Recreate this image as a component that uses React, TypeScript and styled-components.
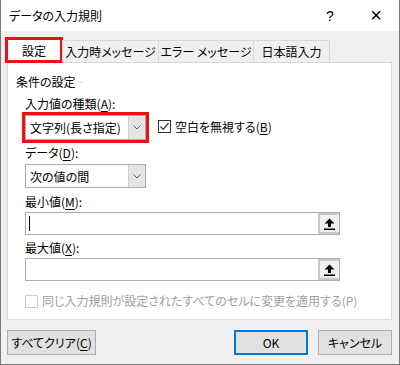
import React from 'react';
import styled, {createGlobalStyle} from 'styled-components';

const GlobalStyle = createGlobalStyle`
body {
margin: 0;
background: #ffffff;
}
* {
box-sizing: border-box;
}
`;

const Window = styled.div`
width: 400px;
height: 365px;
display: flex;
flex-direction: column;
background-color: #f0f0f0;
border: 1px solid #7a7a7a;
border-top: none;
font-family: "Noto Sans CJK JP", "Noto Sans", sans-serif;
font-feature-settings: "palt";
font-size: 12px;
color: #000000;
`;

const TitleBar = styled.div`
height: 31px;
background-color: #ffffff;
display: flex;
align-items: center;
padding-left: 8px;
`;

const TitleText = styled.div`
flex: 1;
`;

interface TitleButtonProps {
    readonly size: number;
}

const TitleButton = styled.div<TitleButtonProps>`
width: 46px;
height: 31px;
display: flex;
align-items: center;
justify-content: center;
font-family: "Liberation Sans", sans-serif;
font-size: ${(props) => props.size}px;
font-weight: 300;
`;

const Content = styled.div`
padding: 6px 0 0 6px;
display: flex;
flex-direction: column;
`;

const TabRow = styled.div`
display: flex;
align-items: flex-end;
height: 26px;
margin-left: -2px;
position: relative;
z-index: 1;
`;

interface TabProps {
    readonly width: number;
    readonly active?: boolean;
}

const Tab = styled.div<TabProps>`
width: ${(props) => props.width}px;
height: ${(props) => props.active ? 26 : 22}px;
display: flex;
align-items: center;
justify-content: center;
background-color: ${(props) => props.active ? '#ffffff' : '#f0f0f0'};
border: ${(props) => props.active ? '3px solid #ee1111' : '1px solid #d9d9d9'};
border-bottom: ${(props) => props.active ? '3px solid #ee1111' : 'none'};
margin-left: ${(props) => props.active ? 0 : -1}px;
margin-bottom: ${(props) => props.active ? 0 : 1}px;
white-space: nowrap;
`;

const Panel = styled.div`
width: 385px;
height: 258px;
margin-top: -1px;
background-color: #ffffff;
border: 1px solid #d9d9d9;
padding: 11px 0 0 8px;
display: flex;
flex-direction: column;
`;

const GroupTitle = styled.div`
display: flex;
align-items: center;
line-height: 16px;
height: 16px;
`;

const GroupLine = styled.div`
width: 5px;
height: 1px;
margin-left: 2px;
background-color: #dcdcdc;
`;

const Group = styled.div`
padding-left: 9px;
display: flex;
flex-direction: column;
`;

interface LabelProps {
    readonly top: number;
}

const Label = styled.div<LabelProps>`
line-height: 16px;
height: 16px;
margin-top: ${(props) => props.top}px;
`;

const U = styled.span`
text-decoration: underline;
text-underline-offset: 2px;
`;

const ComboRow = styled.div`
display: flex;
align-items: center;
margin-left: -3px;
`;

const Highlight = styled.div`
border: 3px solid #ee1111;
`;

interface ComboProps {
    readonly top?: number;
    readonly h: number;
}

const Combo = styled.div<ComboProps>`
width: 121px;
height: ${(props) => props.h}px;
margin-top: ${(props) => props.top || 0}px;
border: 1px solid #adadad;
background-color: #ffffff;
display: flex;
align-items: stretch;
`;

const ComboText = styled.div`
flex: 1;
display: flex;
align-items: center;
padding-left: 4px;
font-size: 12px;
`;

const ComboButton = styled.div`
width: 17px;
background-color: #e5e5e5;
border-left: 1px solid #d0d0d0;
display: flex;
align-items: center;
justify-content: center;
`;

const CheckLabel = styled.label`
display: flex;
align-items: center;
margin-left: 9px;
margin-top: -2px;
gap: 4px;
`;

interface BoxProps {
    readonly disabled?: boolean;
}

const CheckBox = styled.div<BoxProps>`
width: 13px;
height: 13px;
border: 1px solid ${(props) => props.disabled ? '#cccccc' : '#333333'};
background-color: #ffffff;
display: flex;
align-items: center;
justify-content: center;
`;

interface FieldProps {
    readonly top: number;
}

const Field = styled.div<FieldProps>`
width: 315px;
height: 23px;
margin-top: ${(props) => props.top}px;
border: 1px solid #adadad;
display: flex;
align-items: stretch;
`;

const FieldText = styled.div`
flex: 1;
display: flex;
align-items: center;
padding-left: 3px;
`;

const Caret = styled.div`
width: 1px;
height: 15px;
background-color: #000000;
`;

const RefButton = styled.div`
width: 21px;
background-color: #f0f0f0;
border: 2px solid #c8c8c8;
border-right: none;
display: flex;
align-items: center;
justify-content: center;
`;

const ApplyRow = styled.div`
display: flex;
align-items: center;
gap: 4px;
margin-top: 12px;
margin-left: 9px;
color: #a0a0a0;
line-height: 16px;
`;

const Footer = styled.div`
display: flex;
align-items: center;
margin-top: 10px;
padding: 0 7px 0 6px;
`;

interface ButtonProps {
    readonly width: number;
    readonly primary?: boolean;
    readonly gapLeft?: number;
}

const Button = styled.div<ButtonProps>`
width: ${(props) => props.width}px;
height: 25px;
margin-left: ${(props) => props.gapLeft || 0}px;
display: flex;
align-items: center;
justify-content: center;
background-color: #e1e1e1;
border: ${(props) => props.primary ? '2px solid #0078d7' : '1px solid #adadad'};
font-size: 12px;
`;

const Spacer = styled.div`
flex: 1;
`;

const Chevron = () => (
    <svg width="8" height="5" viewBox="0 0 8 5">
        <path d="M0.5 0.5 L4 4 L7.5 0.5" fill="none" stroke="#606060" strokeWidth="1"/>
    </svg>
);

const Check = () => (
    <svg width="11" height="11" viewBox="0 0 11 11">
        <path d="M1.5 5.5 L4.2 8.3 L9.5 2" fill="none" stroke="#333333" strokeWidth="1.2"/>
    </svg>
);

const RefIcon = () => (
    <svg width="11" height="12" viewBox="0 0 11 12">
        <path d="M5.5 0.5 L10.5 5.5 L7 5.5 L7 9 L4 9 L4 5.5 L0.5 5.5 Z" fill="#000000"/>
        <rect x="0" y="10.5" width="11" height="1.5" fill="#000000"/>
    </svg>
);

const App = () => {
    return (
        <Window>
            <GlobalStyle/>
            <TitleBar>
                <TitleText>データの入力規則</TitleText>
                <TitleButton size={14}>?</TitleButton>
                <TitleButton size={20}>×</TitleButton>
            </TitleBar>
            <Content>
                <TabRow>
                    <Tab width={58} active>設定</Tab>
                    <Tab width={97}>入力時メッセージ</Tab>
                    <Tab width={96}>エラー メッセージ</Tab>
                    <Tab width={77}>日本語入力</Tab>
                </TabRow>
                <Panel>
                    <GroupTitle>条件の設定<GroupLine/></GroupTitle>
                    <Group>
                        <Label top={6}>入力値の種類(<U>A</U>):</Label>
                        <ComboRow>
                            <Highlight>
                                <Combo h={25}>
                                    <ComboText>文字列(長さ指定)</ComboText>
                                    <ComboButton><Chevron/></ComboButton>
                                </Combo>
                            </Highlight>
                            <CheckLabel>
                                <CheckBox><Check/></CheckBox>
                                <span>空白を無視する(<U>B</U>)</span>
                            </CheckLabel>
                        </ComboRow>
                        <Label top={2}>データ(<U>D</U>):</Label>
                        <Combo h={24} top={3}>
                            <ComboText>次の値の間</ComboText>
                            <ComboButton><Chevron/></ComboButton>
                        </Combo>
                        <Label top={6}>最小値(<U>M</U>):</Label>
                        <Field top={2}>
                            <FieldText><Caret/></FieldText>
                            <RefButton><RefIcon/></RefButton>
                        </Field>
                        <Label top={5}>最大値(<U>X</U>):</Label>
                        <Field top={2}>
                            <FieldText/>
                            <RefButton><RefIcon/></RefButton>
                        </Field>
                    </Group>
                    <ApplyRow>
                        <CheckBox disabled/>
                        <span>同じ入力規則が設定されたすべてのセルに変更を適用する(P)</span>
                    </ApplyRow>
                </Panel>
            </Content>
            <Footer>
                <Button width={89}>すべてクリア(<U>C</U>)</Button>
                <Spacer/>
                <Button width={74} primary>OK</Button>
                <Button width={74} gapLeft={10}>キャンセル</Button>
            </Footer>
        </Window>
    );
};

export default App;
